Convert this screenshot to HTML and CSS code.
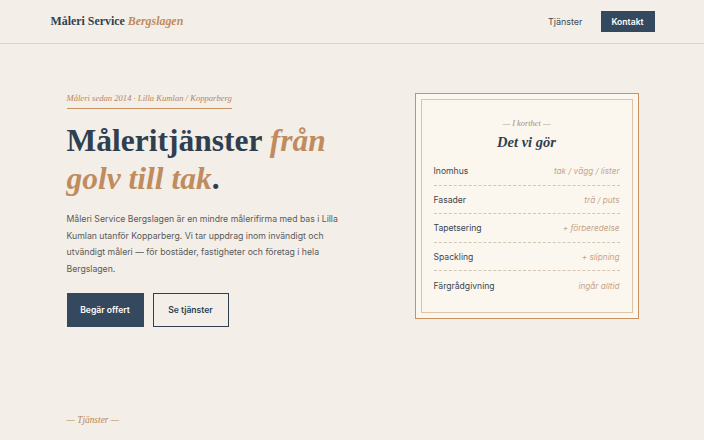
FILE: index.html
```html
<!DOCTYPE html>
<html lang="sv">
<head>
<meta charset="utf-8">
<title>Måleri Service Bergslagen</title>
<link rel="stylesheet" href="styles.css">
</head>
<body>
<header class="site-header">
  <div class="wrap header-inner">
    <a class="logo" href="#">Måleri Service <em>Bergslagen</em></a>
    <nav class="nav">
      <a class="nav-link" href="#tjanster">Tjänster</a>
      <a class="nav-cta" href="#kontakt">Kontakt</a>
    </nav>
  </div>
</header>

<main class="wrap">
  <section class="hero">
    <div class="hero-text">
      <p class="eyebrow">Måleri sedan 2014 · Lilla Kumlan / Kopparberg</p>
      <h1 class="hero-title">Måleritjänster <em>från golv till tak</em>.</h1>
      <p class="lead">Måleri Service Bergslagen är en mindre målerifirma med bas i Lilla Kumlan utanför Kopparberg. Vi tar uppdrag inom invändigt och utvändigt måleri — för bostäder, fastigheter och företag i hela Bergslagen.</p>
      <div class="actions">
        <a class="btn btn-solid" href="#kontakt">Begär offert</a>
        <a class="btn btn-outline" href="#tjanster">Se tjänster</a>
      </div>
    </div>

    <aside class="card">
      <div class="card-inner">
        <p class="card-kicker">— I korthet —</p>
        <h2 class="card-title">Det vi gör</h2>
        <ul class="card-list">
          <li><span>Inomhus</span><em>tak / vägg / lister</em></li>
          <li><span>Fasader</span><em>trä / puts</em></li>
          <li><span>Tapetsering</span><em>+ förberedelse</em></li>
          <li><span>Spackling</span><em>+ slipning</em></li>
          <li><span>Färgrådgivning</span><em>ingår alltid</em></li>
        </ul>
      </div>
    </aside>
  </section>

  <section class="services" id="tjanster">
    <p class="section-kicker">— Tjänster —</p>
  </section>
</main>
</body>
</html>
```

FILE: styles.css
```css
* { box-sizing: border-box; }

html, body { margin: 0; padding: 0; }

body {
  background: #f3eee7;
  color: #2f3f50;
  font-family: "Inter", "Liberation Sans", sans-serif;
}

a { text-decoration: none; color: inherit; }

.wrap {
  width: 605px;
  margin: 0 auto;
}

/* Header */
.site-header {
  border-bottom: 1px solid #ddd2c2;
}

.header-inner {
  height: 43px;
  display: flex;
  align-items: center;
  justify-content: space-between;
}

.logo {
  font-family: "Liberation Serif", serif;
  font-weight: bold;
  font-size: 11.9px;
  color: #2f3f50;
  padding-left: 1px;
}

.logo em {
  color: #c08c5e;
  font-style: italic;
}

.nav {
  display: flex;
  align-items: center;
  gap: 18px;
}

.nav-link {
  font-size: 9px;
  color: #3d4a57;
}

.nav-cta {
  background: #34495e;
  color: #fff;
  font-size: 8.6px;
  font-weight: 600;
  width: 54px;
  height: 21px;
  display: flex;
  align-items: center;
  justify-content: center;
}

/* Hero */
.hero {
  display: flex;
  justify-content: space-between;
  align-items: center;
  padding: 41px 17px 0 17px;
}

.hero-text {
  width: 300px;
}

.eyebrow {
  display: inline-block;
  margin: 0;
  font-family: "Liberation Serif", serif;
  font-style: italic;
  font-size: 8.6px;
  color: #b8875c;
  padding-bottom: 5px;
  border-bottom: 1px solid #c9915f;
}

.hero-title {
  margin: 13px 0 0;
  font-family: "Liberation Serif", serif;
  font-weight: bold;
  font-size: 31.5px;
  line-height: 38px;
  color: #2f3f50;
}

.hero-title em {
  color: #c08c5e;
  font-style: italic;
}

.lead {
  margin: 13px 0 0;
  font-size: 8.7px;
  line-height: 16.5px;
  color: #5a5a5a;
  width: 290px;
}

.actions {
  display: flex;
  gap: 9px;
  margin-top: 16px;
}

.btn {
  height: 34px;
  display: flex;
  align-items: center;
  justify-content: center;
  font-size: 8.6px;
  font-weight: 600;
}

.btn-solid {
  width: 77px;
  background: #34495e;
  color: #fff;
}

.btn-outline {
  width: 76px;
  border: 1px solid #2f3f50;
  color: #2f3f50;
}

/* Card */
.card {
  width: 224px;
  margin-right: -1px;
  background: #fcf7ee;
  border: 1px solid #c9915f;
  padding: 5px;
}

.card-inner {
  border: 1px solid #dcc3a5;
  padding: 19px 12px 12px 12px;
}

.card-kicker {
  margin: 0;
  text-align: center;
  font-family: "Liberation Serif", serif;
  font-style: italic;
  font-size: 8.4px;
  color: #a98c70;
}

.card-title {
  margin: 6px 0 6px;
  text-align: center;
  font-family: "Liberation Serif", serif;
  font-style: italic;
  font-weight: bold;
  font-size: 14.5px;
  color: #2f3f50;
}

.card-list {
  list-style: none;
  margin: 0;
  padding: 0;
}

.card-list li {
  display: flex;
  justify-content: space-between;
  align-items: center;
  height: 28.5px;
  font-size: 8.6px;
  color: #3b4550;
  border-bottom: 1px dashed #d3c6b5;
}

.card-list li:last-child {
  border-bottom: none;
}

.card-list em {
  font-size: 8.2px;
  color: #c4a48c;
  font-style: italic;
}

/* Services */
.services {
  padding: 88px 17px 0;
}

.section-kicker {
  margin: 0;
  font-family: "Liberation Serif", serif;
  font-style: italic;
  font-size: 9.4px;
  color: #b8875c;
}
```
